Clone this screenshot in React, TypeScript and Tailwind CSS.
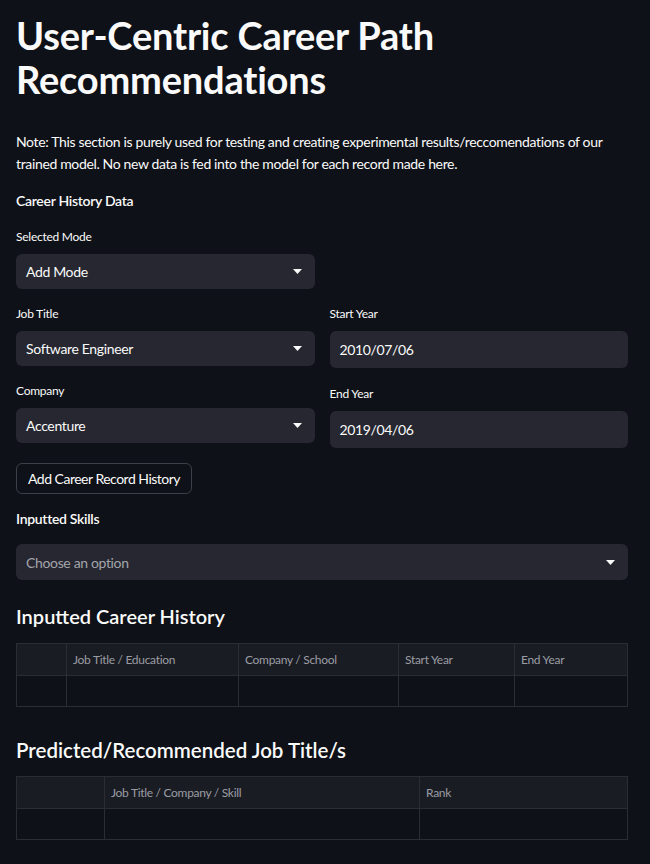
import React from "react";

const font = { fontFamily: "Lato, 'Liberation Sans', sans-serif" };

const Caret = () => (
  <svg width="9" height="5" viewBox="0 0 9 5" className="shrink-0">
    <path d="M0 0 H9 L4.5 5 Z" fill="#fafafa" />
  </svg>
);

const Label = ({ children, className = "" }: { children: React.ReactNode; className?: string }) => (
  <div className={`text-[12px] tracking-[-0.25px] text-[#fafafa] leading-none ${className}`}>{children}</div>
);

const Select = ({ value, muted = false, className = "" }: { value: string; muted?: boolean; className?: string }) => (
  <div
    className={`h-[35px] bg-[#262730] rounded-md flex items-center justify-between pl-[10px] pr-[13px] ${className}`}
  >
    <span className={`text-[14px] tracking-[-0.35px] ${muted ? "text-[#a3a4ab]" : "text-[#fafafa]"}`}>{value}</span>
    <Caret />
  </div>
);

const Input = ({ value }: { value: string }) => (
  <div className="h-[37px] bg-[#262730] rounded-md flex items-center pl-[10px]">
    <span className="text-[14px] tracking-[-0.35px] text-[#fafafa]">{value}</span>
  </div>
);

const Table = ({ cols }: { cols: { label: string; w: string }[] }) => (
  <div className="border border-[#2b2d35] flex flex-col">
    <div className="flex h-[32px] bg-[#1a1c23] border-b border-[#2b2d35]">
      {cols.map((c, i) => (
        <div
          key={i}
          className={`${c.w} flex items-center pl-[6px] text-[12px] tracking-[-0.3px] text-[#9a9ca3] ${i > 0 ? "border-l border-[#2b2d35]" : ""}`}
        >
          {c.label}
        </div>
      ))}
    </div>
    <div className="flex h-[30px]">
      {cols.map((c, i) => (
        <div key={i} className={`${c.w} ${i > 0 ? "border-l border-[#2b2d35]" : ""}`} />
      ))}
    </div>
  </div>
);

export default function App() {
  return (
    <div className="w-[650px] min-h-[864px] bg-[#0e1117] text-[#fafafa] pl-4 pr-[22px] pt-[13px]" style={font}>
      <h1 className="text-[38px] font-bold leading-[44px] tracking-[-0.2px]">
        User-Centric Career Path
        <br />
        Recommendations
      </h1>

      <p className="mt-[30px] text-[14px] tracking-[-0.35px] leading-[22px]">
        Note: This section is purely used for testing and creating experimental results/reccomendations of our trained
        model. No new data is fed into the model for each record made here.
      </p>

      <div className="mt-[15px] text-[14px] tracking-[-0.3px] font-semibold">Career History Data</div>

      <Label className="mt-[20px]">Selected Mode</Label>
      <Select value="Add Mode" className="mt-[11px] w-[299px]" />

      <div className="mt-[19px] grid grid-cols-2 gap-x-[15px]">
        <div className="flex flex-col">
          <Label>Job Title</Label>
          <Select value="Software Engineer" className="mt-[11px]" />
          <Label className="mt-[19px]">Company</Label>
          <Select value="Accenture" className="mt-[11px]" />
        </div>
        <div className="flex flex-col">
          <Label>Start Year</Label>
          <div className="mt-[11px]">
            <Input value="2010/07/06" />
          </div>
          <Label className="mt-[20px]">End Year</Label>
          <div className="mt-[11px]">
            <Input value="2019/04/06" />
          </div>
        </div>
      </div>

      <button className="mt-[15px] h-[31px] px-[11px] border border-[#3d3f48] rounded-md text-[14px] tracking-[-0.5px] text-[#fafafa] bg-transparent">
        Add Career Record History
      </button>

      <div className="mt-[14px] text-[14px] tracking-[-0.3px] font-semibold">Inputted Skills</div>

      <Select value="Choose an option" muted className="mt-[15px] h-[36px]" />

      <h3 className="mt-[22px] text-[20px] font-semibold leading-[28px]">Inputted Career History</h3>

      <div className="mt-[13px]">
        <Table
          cols={[
            { label: "", w: "w-[49px]" },
            { label: "Job Title / Education", w: "w-[172px]" },
            { label: "Company / School", w: "w-[160px]" },
            { label: "Start Year", w: "w-[116px]" },
            { label: "End Year", w: "flex-1" },
          ]}
        />
      </div>

      <h3 className="mt-[29px] text-[20.5px] font-semibold leading-[28px]">Predicted/Recommended Job Title/s</h3>

      <div className="mt-[12px]">
        <Table
          cols={[
            { label: "", w: "w-[87px]" },
            { label: "Job Title / Company / Skill", w: "w-[315px]" },
            { label: "Rank", w: "flex-1" },
          ]}
        />
      </div>
    </div>
  );
}
